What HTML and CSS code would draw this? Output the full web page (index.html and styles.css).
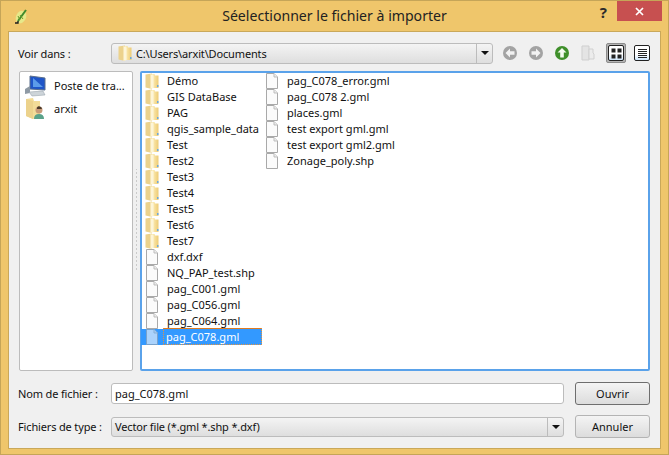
FILE: index.html
```html
<!DOCTYPE html>
<html lang="fr">
<head>
    <meta charset="UTF-8">
    <title>Séelectionner le fichier à importer</title>
    <link rel="stylesheet" href="styles.css">
</head>
<body>
    <svg class="defs" width="0" height="0">
        <defs>
            <linearGradient id="folderGrad" x1="0" y1="0" x2="1" y2="0">
                <stop offset="0" stop-color="#fbf0c4"/>
                <stop offset="0.5" stop-color="#f6dd96"/>
                <stop offset="1" stop-color="#eccb76"/>
            </linearGradient>
            <symbol id="folder" viewBox="0 0 14 16">
                <path d="M0.5 1.5 L7 0.5 L7 16 L0.5 14.5 Z" fill="#ecd28c"/>
                <path d="M7 1 L9.5 1 L10 2.5 L13.5 2.5 L13.5 15 L7 15 Z" fill="url(#folderGrad)"/>
                <path d="M5.5 1 L8.5 2.5 L8.5 15 L5.5 16 Z" fill="#fdf5d8"/>
                <rect x="12" y="12" width="1.5" height="2" fill="#6aa8e0"/>
            </symbol>
            <symbol id="file" viewBox="0 0 14 16">
                <path d="M1.5 .5 H9 L12.5 4 V15.5 H1.5 Z" fill="#fbfbfb" stroke="#a9a9a9"/>
                <path d="M9 .5 V4 H12.5" fill="#eee" stroke="#bdbdbd"/>
            </symbol>
        </defs>
    </svg>

    <div class="window">
        <div class="titlebar">
            <svg class="app-icon" width="16" height="18" viewBox="0 0 16 18">
                <ellipse cx="8" cy="10" rx="5" ry="6.5" fill="#e6e98a" transform="rotate(25 8 10)"/>
                <path d="M5 14 L13 3" stroke="#3f8a2c" stroke-width="2"/>
                <path d="M7 8 L10 12 M5 9 L7 13" stroke="#6b9c2e" stroke-width="1"/>
                <path d="M2 16 H5 V14" stroke="#1d1d1d" stroke-width="1.4" fill="none"/>
            </svg>
            <div class="title">Séelectionner le fichier à importer</div>
            <div class="help">?</div>
            <div class="close">
                <svg width="9" height="9" viewBox="0 0 9 9">
                    <path d="M1 1 L8 8 M8 1 L1 8" stroke="#fff" stroke-width="1.7"/>
                </svg>
            </div>
        </div>

        <div class="client">
            <div class="row toolbar">
                <div class="label">Voir dans :</div>
                <div class="combo path">
                    <svg class="combo-icon" width="16" height="16"><use href="#folder"/></svg>
                    <span class="combo-text">C:\Users\arxit\Documents</span>
                    <div class="combo-arrow"><span class="caret"></span></div>
                </div>
                <div class="tools">
                    <svg class="tool" width="16" height="16" viewBox="0 0 16 16">
                        <circle cx="8" cy="8" r="7" fill="#a3a3a3"/>
                        <path d="M8 3.5 L3.5 8 L8 12.5 V9.8 H12.5 V6.2 H8 Z" fill="#f2f2f2"/>
                    </svg>
                    <svg class="tool" width="16" height="16" viewBox="0 0 16 16">
                        <circle cx="8" cy="8" r="7" fill="#a3a3a3"/>
                        <path d="M8 3.5 L12.5 8 L8 12.5 V9.8 H3.5 V6.2 H8 Z" fill="#f2f2f2"/>
                    </svg>
                    <svg class="tool" width="16" height="16" viewBox="0 0 16 16">
                        <circle cx="8" cy="8" r="7" fill="#3f8f2a"/>
                        <path d="M8 3 L12.5 7.5 H9.8 V12.5 H6.2 V7.5 H3.5 Z" fill="#f4fbf0"/>
                    </svg>
                    <svg class="tool" width="16" height="16" viewBox="0 0 16 16">
                        <path d="M2 1 H9 V15 H2 Z" fill="#e4e4e4" stroke="#cfcfcf"/>
                        <path d="M9 4 H13 V8 L14 9 V14 H9 Z" fill="#ececec" stroke="#d0d0d0"/>
                    </svg>
                    <div class="view-btn active">
                        <div class="view-icon">
                            <svg width="15" height="15" viewBox="0 0 15 15">
                                <path d="M2.5 2.5 h4 v4 h-4 Z M8.5 2.5 h4 v4 h-4 Z M2.5 8.5 h4 v4 h-4 Z M8.5 8.5 h4 v4 h-4 Z" fill="#222"/>
                            </svg>
                        </div>
                    </div>
                    <div class="view-btn">
                        <div class="view-icon">
                            <svg width="15" height="15" viewBox="0 0 15 15">
                                <path d="M3 3.5 H12 M3 5.5 H12 M3 7.5 H12 M3 9.5 H12 M3 11.5 H12" stroke="#222" stroke-width="1"/>
                            </svg>
                        </div>
                    </div>
                </div>
            </div>

            <div class="panes">
                <div class="sidebar">
                    <div class="side-item">
                        <svg width="24" height="22" viewBox="0 0 24 22">
                            <path d="M6 1 L21 3 V15 L6 14 Z" fill="#1f55c8" stroke="#5b6f8c"/>
                            <path d="M9 3 L19 12 H9 Z" fill="#5c9bea"/>
                            <path d="M1 14 L6 11 V18 L1 19 Z" fill="#8f9aa5"/>
                            <path d="M5 17 L19 16 L21 20 L8 21 Z" fill="#cdd4d9" stroke="#8f9aa5" stroke-width=".5"/>
                        </svg>
                        <span>Poste de tra...</span>
                    </div>
                    <div class="side-item">
                        <svg width="24" height="22" viewBox="0 0 24 22">
                            <path d="M2 1 L9 0 L10 3 L16 3 V19 L9 21 L2 18 Z" fill="#f3dc98"/>
                            <path d="M2 1 L9 3 V21 L2 18 Z" fill="#ecd28c"/>
                            <circle cx="15" cy="12" r="3.5" fill="#c89a78"/>
                            <path d="M13 9.5 Q15 7 18 10 L17.5 11 H13 Z" fill="#4b3a2a"/>
                            <path d="M10 21 Q10 16 15 16 Q20 16 20 21 Z" fill="#5aa28a"/>
                        </svg>
                        <span>arxit</span>
                    </div>
                </div>
                <div class="splitter"></div>
                <div class="files">
                    <div class="col col-first">
                        <div class="item"><svg width="14" height="16"><use href="#folder"/></svg><span>Démo</span></div>
                        <div class="item"><svg width="14" height="16"><use href="#folder"/></svg><span>GIS DataBase</span></div>
                        <div class="item"><svg width="14" height="16"><use href="#folder"/></svg><span>PAG</span></div>
                        <div class="item"><svg width="14" height="16"><use href="#folder"/></svg><span>qgis_sample_data</span></div>
                        <div class="item"><svg width="14" height="16"><use href="#folder"/></svg><span>Test</span></div>
                        <div class="item"><svg width="14" height="16"><use href="#folder"/></svg><span>Test2</span></div>
                        <div class="item"><svg width="14" height="16"><use href="#folder"/></svg><span>Test3</span></div>
                        <div class="item"><svg width="14" height="16"><use href="#folder"/></svg><span>Test4</span></div>
                        <div class="item"><svg width="14" height="16"><use href="#folder"/></svg><span>Test5</span></div>
                        <div class="item"><svg width="14" height="16"><use href="#folder"/></svg><span>Test6</span></div>
                        <div class="item"><svg width="14" height="16"><use href="#folder"/></svg><span>Test7</span></div>
                        <div class="item"><svg width="14" height="16"><use href="#file"/></svg><span>dxf.dxf</span></div>
                        <div class="item"><svg width="14" height="16"><use href="#file"/></svg><span>NQ_PAP_test.shp</span></div>
                        <div class="item"><svg width="14" height="16"><use href="#file"/></svg><span>pag_C001.gml</span></div>
                        <div class="item"><svg width="14" height="16"><use href="#file"/></svg><span>pag_C056.gml</span></div>
                        <div class="item"><svg width="14" height="16"><use href="#file"/></svg><span>pag_C064.gml</span></div>
                        <div class="item selected"><svg width="14" height="16"><use href="#file"/></svg><span>pag_C078.gml</span></div>
                    </div>
                    <div class="col">
                        <div class="item"><svg width="14" height="16"><use href="#file"/></svg><span>pag_C078_error.gml</span></div>
                        <div class="item"><svg width="14" height="16"><use href="#file"/></svg><span>pag_C078 2.gml</span></div>
                        <div class="item"><svg width="14" height="16"><use href="#file"/></svg><span>places.gml</span></div>
                        <div class="item"><svg width="14" height="16"><use href="#file"/></svg><span>test export gml.gml</span></div>
                        <div class="item"><svg width="14" height="16"><use href="#file"/></svg><span>test export gml2.gml</span></div>
                        <div class="item"><svg width="14" height="16"><use href="#file"/></svg><span>Zonage_poly.shp</span></div>
                    </div>
                </div>
            </div>

            <div class="row name-row">
                <div class="label">Nom de fichier :</div>
                <div class="input">pag_C078.gml</div>
                <div class="btn default">Ouvrir</div>
            </div>
            <div class="row type-row">
                <div class="label">Fichiers de type :</div>
                <div class="combo filter">
                    <span class="combo-text">Vector file (*.gml *.shp *.dxf)</span>
                    <div class="combo-arrow"><span class="caret"></span></div>
                </div>
                <div class="btn">Annuler</div>
            </div>
        </div>
    </div>
</body>
</html>
```

FILE: styles.css
```css
* {
    box-sizing: border-box;
}
body {
    margin: 0;
    font-family: "Noto Sans", sans-serif;
    font-size: 11px;
    color: #111;
}
.defs {
    display: block;
    height: 0;
}
.window {
    width: 669px;
    height: 455px;
    background-color: #efc66b;
    border: 1px solid #c5a558;
    padding: 0 7px 7px 7px;
    display: flex;
    flex-direction: column;
}

/* title bar */
.titlebar {
    height: 30px;
    flex: none;
    display: flex;
    align-items: flex-start;
    margin-right: -1px;
}
.app-icon {
    margin: 6px 0 0 5px;
    flex: none;
}
.title {
    flex: 1;
    text-align: center;
    font-size: 14.1px;
    line-height: 29px;
    color: #222;
    padding-left: 69px;
}
.help {
    width: 46px;
    font-size: 15px;
    font-weight: bold;
    line-height: 22px;
    color: #2b2b2b;
    text-align: right;
    padding-right: 10px;
}
.close {
    width: 45px;
    height: 20px;
    background-color: #c75050;
    display: flex;
    align-items: center;
    justify-content: center;
}

/* client area */
.client {
    flex: 1;
    background-color: #f0f0f0;
    border: 1px solid #c9a85a;
    padding: 10px 10px 10px 9px;
    display: flex;
    flex-direction: column;
}
.row {
    display: flex;
    align-items: center;
    flex: none;
}
.label {
    width: 93px;
    white-space: nowrap;
    letter-spacing: -0.15px;
    flex: none;
}
.toolbar {
    height: 22px;
}
.combo {
    height: 21px;
    border: 1px solid #bcbcbc;
    border-radius: 3px;
    background: linear-gradient(#f4f4f4, #dedede);
    display: flex;
    align-items: center;
    flex: none;
}
.combo.path {
    width: 382px;
}
.combo.filter {
    width: 453px;
    height: 20px;
}
.combo-icon {
    margin: 0 3px 0 5px;
    flex: none;
}
.filter .combo-text {
    padding-left: 3px;
}
.combo-text {
    flex: 1;
    white-space: nowrap;
    letter-spacing: -0.15px;
}
.combo-arrow {
    width: 16px;
    height: 100%;
    border-left: 1px solid #bcbcbc;
    display: flex;
    align-items: center;
    justify-content: center;
}
.caret {
    width: 0;
    height: 0;
    border-left: 4px solid transparent;
    border-right: 4px solid transparent;
    border-top: 4px solid #111;
}
.tools {
    display: flex;
    align-items: center;
    margin-left: 9px;
}
.tool {
    margin-right: 10px;
    flex: none;
}
.view-btn {
    width: 20px;
    height: 20px;
    padding: 2px;
    margin-right: 6px;
    border: 1px solid transparent;
    border-radius: 2px;
}
.view-btn.active {
    background-color: #b4b4b4;
    border-color: #8c8c8c;
}
.view-icon {
    width: 16px;
    height: 16px;
    background: linear-gradient(#fff 60%, #cfe6fb);
    border: 1px solid #222;
    border-radius: 2px;
    margin: -1px;
    display: flex;
    align-items: center;
    justify-content: center;
}
.view-icon svg {
    flex: none;
}

/* panes */
.panes {
    height: 300px;
    margin-top: 7px;
    display: flex;
    flex: none;
}
.sidebar {
    width: 114px;
    margin-left: 1px;
    background-color: #fff;
    border: 1px solid #bcbcbc;
    border-radius: 2px;
    padding: 2px 0 0 4px;
}
.side-item {
    display: flex;
    align-items: center;
    height: 23px;
    gap: 6px;
}
.splitter {
    width: 7px;
    background-image: radial-gradient(#b4b4b4 0.8px, transparent 1px);
    background-size: 7px 4px;
    background-repeat: repeat-y;
    background-clip: content-box;
    padding: 98px 0 100px;
}
.files {
    width: 510px;
    background-color: #fff;
    border: 2px solid #5aa2ea;
    border-radius: 2px;
    display: flex;
}
.col {
    display: flex;
    flex-direction: column;
}
.col-first {
    width: 120px;
}
.item {
    height: 16px;
    line-height: 16px;
    display: flex;
    align-items: center;
    white-space: nowrap;
    padding-left: 3px;
}
.item svg {
    flex: none;
    margin-right: 8px;
}
.item.selected {
    width: 121px;
    margin-left: -1px;
    padding-left: 4px;
    background-color: #3399ff;
    color: #fff;
}
.item.selected svg {
    opacity: 0.6;
}
.item.selected span {
    flex: 1;
    margin-left: -4px;
    padding-left: 2px;
    height: 17px;
    margin-top: -1px;
    line-height: 15px;
    border: 1px dotted #e8943c;
    border-top: 1px solid #e07b20;
}

/* bottom rows */
.name-row {
    margin-top: 11px;
    height: 23px;
}
.type-row {
    margin-top: 10px;
    height: 23px;
}
.input {
    width: 453px;
    height: 21px;
    background-color: #fff;
    border: 1px solid #bcbcbc;
    border-radius: 3px;
    line-height: 19px;
    padding-left: 3px;
    flex: none;
}
.btn {
    width: 75px;
    height: 23px;
    margin-left: 11px;
    border: 1px solid #b4b4b4;
    border-radius: 3px;
    background: linear-gradient(#f4f4f4, #dcdcdc);
    text-align: center;
    line-height: 21px;
    flex: none;
}
.btn.default {
    border-color: #6e6e6e;
}
```
